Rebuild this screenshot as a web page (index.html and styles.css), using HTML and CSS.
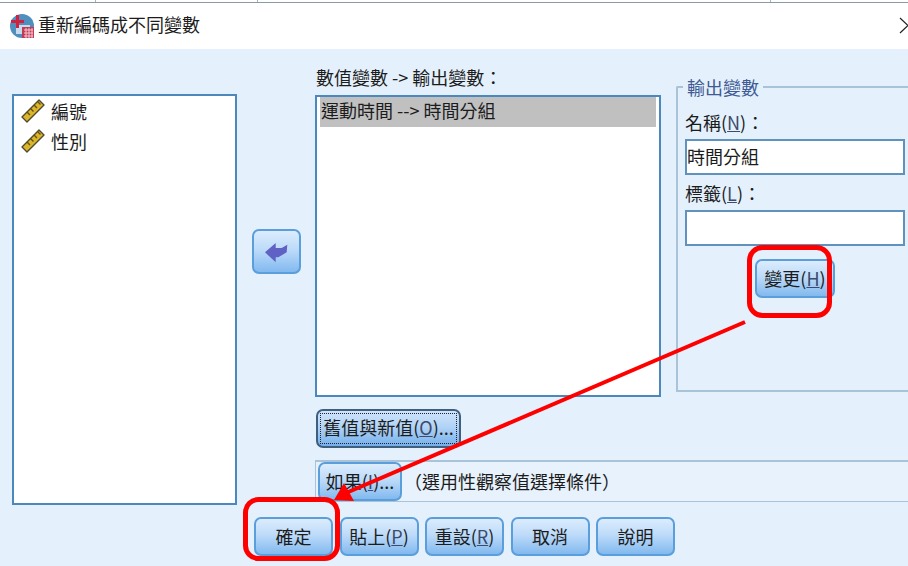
FILE: index.html
```html
<!DOCTYPE html>
<html lang="zh-Hant">
<head>
    <meta charset="UTF-8">
    <title>重新編碼成不同變數</title>
    <link rel="stylesheet" href="styles.css">
</head>
<body>
    <svg width="0" height="0" class="defs">
        <symbol id="ruler" viewBox="0 0 24 24">
            <path d="M1 18 L18 1 L23 6 L6 23 Z" fill="#dcb62a" stroke="#4f4a30" stroke-width="1.400" stroke-linejoin="round"/>
            <path d="M6 13 L9 16 M9.500 9.500 L12.500 12.500 M13 6 L16 9 M16.500 2.500 L19.500 5.500" stroke="#5f5016" stroke-width="1.400"/>
        </symbol>
    </svg>

    <div class="topline"></div>

    <div class="titlebar">
        <svg class="appicon" width="26" height="26" viewBox="0 0 26 26">
            <circle cx="13" cy="14" r="12" fill="#4f8fbe"/>
            <path d="M7 13 H21 V22 H7 Z" fill="#c6dcec"/>
            <path d="M2 8 H15 V11 H2 Z M7 3 H10 V16 H7 Z" fill="#d0213f"/>
            <path d="M13 15 H25 V26 H13 Z" fill="#c23a55"/>
            <path d="M15 18 H24 M15 21 H24 M15 24 H24 M17 16 V26 M20 16 V26 M23 16 V26" stroke="#f3c6cf" stroke-width="1"/>
        </svg>
        <span class="title">重新編碼成不同變數</span>
        <svg class="chevron" width="10" height="17" viewBox="0 0 10 17">
            <path d="M1 1 L9 8.500 L1 16" fill="none" stroke="#222" stroke-width="1.200"/>
        </svg>
    </div>

    <div class="dialog">
        <div class="main">
            <!-- 左邊變數清單 -->
            <div class="varlist">
                <div class="varitem"><svg class="ruleicon" width="24" height="24"><use href="#ruler"/></svg>編號</div>
                <div class="varitem"><svg class="ruleicon" width="24" height="24"><use href="#ruler"/></svg>性別</div>
            </div>

            <div class="mover">
                <button class="btn movebtn">
                    <svg width="23" height="20" viewBox="0 0 23 20">
                        <path d="M0 9.300 L10.700 0 V5 H16.700 L22.300 1.700 L21.700 9.300 L13.300 14.300 H10.700 V19.300 Z" fill="#5f62c4"/>
                    </svg>
                </button>
            </div>

            <div class="center">
                <div class="upper">
                    <div class="middle">
                        <div class="label listlabel">數值變數 -&gt; 輸出變數：</div>
                        <div class="outlist">
                            <div class="outrow">運動時間 --&gt; 時間分組</div>
                        </div>
                    </div>
                    <!-- 輸出變數 -->
                    <fieldset class="outgroup">
                        <legend>輸出變數</legend>
                        <div class="label">名稱(<u>N</u>)：</div>
                        <div class="field">時間分組</div>
                        <div class="label">標籤(<u>L</u>)：</div>
                        <div class="field"></div>
                        <button class="btn changebtn">變更(<u>H</u>)</button>
                    </fieldset>
                </div>
                <button class="btn oldnew"><span class="dots">舊值與新值(<u>O</u>)...</span></button>
                <div class="ifstrip">
                    <button class="btn ifbtn">如果(<u>I</u>)...</button>
                    <span class="iftext">（選用性觀察值選擇條件）</span>
                </div>
            </div>
        </div>

        <div class="footer">
            <button class="btn">確定</button>
            <button class="btn">貼上(<u>P</u>)</button>
            <button class="btn">重設(<u>R</u>)</button>
            <button class="btn">取消</button>
            <button class="btn">說明</button>
        </div>
    </div>

    <!-- 紅色標註 -->
    <svg class="notes" width="908" height="566" viewBox="0 0 908 566">
        <rect x="749.500" y="247.500" width="80" height="68" rx="13" class="redbox"/>
        <rect x="245.500" y="499.500" width="92" height="59" rx="13" class="redbox"/>
        <path d="M745 322 L346 493" class="redline"/>
        <path d="M334 500 L344 483 L354 501 Z" fill="#f00"/>
    </svg>
</body>
</html>
```

FILE: styles.css
```css
body{
    margin: 0;
    width: 908px;
    height: 566px;
    overflow: hidden;
    position: relative;
    background: #e4f1fd;
    color: #1c1c1c;
    font-family: "Noto Sans CJK TC", "Liberation Sans", sans-serif;
    font-size: 18px;
}
.defs{
    position: absolute;
}
u{
    color: #3d4a6b;
}

/* 上方細線和標題列 */
.topline{
    height: 3px;
    box-sizing: border-box;
    border-bottom: 1px solid #8d98a6;
    background:
        linear-gradient(#a9b3bf, #a9b3bf) 95px 0 / 1px 3px no-repeat,
        linear-gradient(#a9b3bf, #a9b3bf) 257px 0 / 1px 3px no-repeat,
        linear-gradient(#a9b3bf, #a9b3bf) 770px 0 / 1px 3px no-repeat,
        #fff;
}
.titlebar{
    height: 46px;
    background: #fff;
    display: flex;
    align-items: center;
    padding-left: 9px;
    box-sizing: border-box;
}
.appicon{
    flex: none;
    margin-top: -2px;
}
.title{
    margin-left: 3px;
    margin-top: -5px;
}
.chevron{
    margin-left: auto;
    margin-right: -1px;
    margin-top: -2px;
}

/* 對話框主體 */
.dialog{
    height: 517px;
    display: flex;
    flex-direction: column;
}
.main{
    display: flex;
    padding: 19px 0 0 12px;
}
.varlist{
    width: 225px;
    height: 411px;
    margin-top: 26px;
    box-sizing: border-box;
    border: 2px solid #4b88bd;
    background: #fff;
    padding: 0 0 0 7px;
}
.varitem{
    height: 30px;
    line-height: 28px;
    display: flex;
    align-items: center;
    gap: 6px;
}
.mover{
    width: 78px;
    flex: none;
    padding: 161px 0 0 15px;
    box-sizing: border-box;
}
.center{
    flex: 1;
    min-width: 0;
}
.upper{
    display: flex;
}
.middle{
    width: 346px;
    flex: none;
}
.label{
    height: 27px;
    line-height: 20px;
}
.listlabel{
    line-height: 18px;
    margin-left: 1px;
}
.outlist{
    height: 302px;
    box-sizing: border-box;
    border: 2px solid #4b88bd;
    background: #fff;
    padding: 0 3px;
}
.outrow{
    height: 30px;
    line-height: 27px;
    background: #c0c0c0;
    padding-left: 1px;
}

/* 輸出變數群組 */
.outgroup{
    flex: 1;
    min-width: 0;
    margin: 9px 0 0 15px;
    height: 315px;
    box-sizing: border-box;
    padding: 15px 3px 0 7px;
    border: 2px solid #a9c3d9;
    border-right: none;
    border-radius: 2px 0 0 0;
}
.outgroup legend{
    padding: 0 4px;
    margin-left: -2px;
    color: #3f5a94;
    line-height: 20px;
}
.field{
    height: 36px;
    box-sizing: border-box;
    border: 2px solid #5f93bd;
    background: #fff;
    margin-bottom: 8px;
    line-height: 30px;
}

/* 按鈕 */
.btn{
    width: 79px;
    height: 39px;
    flex: none;
    padding: 0 0 2px;
    box-sizing: border-box;
    border: 2px solid #5a9edb;
    border-radius: 7px;
    background: linear-gradient(#dcecfd, #bddbf9 45%, #82b9ef);
    font-family: inherit;
    font-size: 18px;
    color: #1c1c1c;
    white-space: nowrap;
}
.movebtn{
    width: 49px;
    height: 45px;
    padding: 2px 0 0;
    display: flex;
    align-items: center;
    justify-content: center;
}
.changebtn{
    display: block;
    width: 80px;
    margin: 13px 0 0 70px;
}
.oldnew{
    display: block;
    width: 145px;
    margin: 12px 0 0 1px;
    padding: 2px;
    border: 2px solid #3f5f7e;
    background: linear-gradient(#cfe4fb, #b2d3f6 45%, #74b0ec);
}
.dots{
    display: block;
    height: 31px;
    line-height: 27px;
    box-sizing: border-box;
    border: 1px dotted #223;
}
.ifstrip{
    height: 42px;
    margin-top: 12px;
    box-sizing: border-box;
    border: 1px solid #a9c3d9;
    border-right: none;
    border-top-width: 2px;
    background: #e7f2fd;
    display: flex;
    align-items: center;
    padding-left: 2px;
}
.ifbtn{
    width: 84px;
}
.iftext{
    margin-left: 2px;
    margin-top: -2px;
}
.footer{
    display: flex;
    gap: 6.500px;
    padding-left: 254px;
    margin-top: 12px;
}

/* 紅色標註 */
.notes{
    position: absolute;
    left: 0;
    top: 0;
    pointer-events: none;
}
.redbox{
    fill: none;
    stroke: #f00;
    stroke-width: 5;
}
.redline{
    fill: none;
    stroke: #f00;
    stroke-width: 4;
}
```
